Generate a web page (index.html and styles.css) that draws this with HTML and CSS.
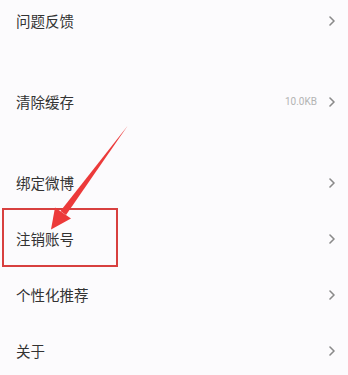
FILE: index.html
```html
<!DOCTYPE html>
<html lang="zh">
<head>
<meta charset="utf-8">
<title>设置</title>
<link rel="stylesheet" href="styles.css">
</head>
<body>
<div class="page">
  <div class="settings">
    <div class="row"><span class="label">问题反馈</span><span class="right"><svg class="chev" viewBox="0 0 6 10"><path d="M1 1 L5 5 L1 9"/></svg></span></div>
    <div class="row gap"><span class="label">清除缓存</span><span class="right"><span class="value">10.0KB</span><svg class="chev" viewBox="0 0 6 10"><path d="M1 1 L5 5 L1 9"/></svg></span></div>
    <div class="row gap"><span class="label">绑定微博</span><span class="right"><svg class="chev" viewBox="0 0 6 10"><path d="M1 1 L5 5 L1 9"/></svg></span></div>
    <div class="row marked"><span class="label">注销账号</span><span class="right"><svg class="chev" viewBox="0 0 6 10"><path d="M1 1 L5 5 L1 9"/></svg></span><span class="highlight"></span></div>
    <div class="row"><span class="label">个性化推荐</span><span class="right"><svg class="chev" viewBox="0 0 6 10"><path d="M1 1 L5 5 L1 9"/></svg></span></div>
    <div class="row"><span class="label">关于</span><span class="right"><svg class="chev" viewBox="0 0 6 10"><path d="M1 1 L5 5 L1 9"/></svg></span></div>
  </div>
  <svg class="arrow" viewBox="0 0 348 375" width="348" height="375">
    <polygon points="127.5,126 60.5,211 66,215"/>
    <polygon points="55,207.5 51,229.5 71,218.5"/>
  </svg>
</div>
</body>
</html>
```
FILE: styles.css
```css
html, body {
  margin: 0;
  padding: 0;
  background: #fcfbfd;
}
body {
  font-family: "Noto Sans CJK SC", "Noto Sans", Roboto, sans-serif;
  overflow: hidden;
}
.page {
  position: relative;
  width: 348px;
  height: 375px;
  overflow: hidden;
}
.settings {
  display: flex;
  flex-direction: column;
  margin-top: -7px;
}
.row {
  position: relative;
  height: 56px;
  display: flex;
  align-items: center;
  justify-content: space-between;
  padding: 0 13px 0 16px;
}
.row.gap {
  margin-top: 25px;
}
.label {
  font-size: 14.5px;
  color: #333333;
  line-height: 1;
}
.right {
  display: flex;
  align-items: center;
  gap: 12px;
}
.value {
  font-family: Roboto, "Noto Sans", sans-serif;
  font-size: 10px;
  color: #b3b3b3;
  line-height: 1;
}
.chev {
  width: 6px;
  height: 10px;
  display: block;
}
.chev path {
  fill: none;
  stroke: #8a8a8a;
  stroke-width: 1.6;
  stroke-linecap: round;
  stroke-linejoin: round;
}
.highlight {
  position: absolute;
  left: 2px;
  top: -3px;
  width: 112px;
  height: 55px;
  border: 2px solid #d8403f;
  pointer-events: none;
}
.arrow {
  position: absolute;
  left: 0;
  top: 0;
  pointer-events: none;
}
.arrow polygon {
  fill: #ec3a3a;
}
```
